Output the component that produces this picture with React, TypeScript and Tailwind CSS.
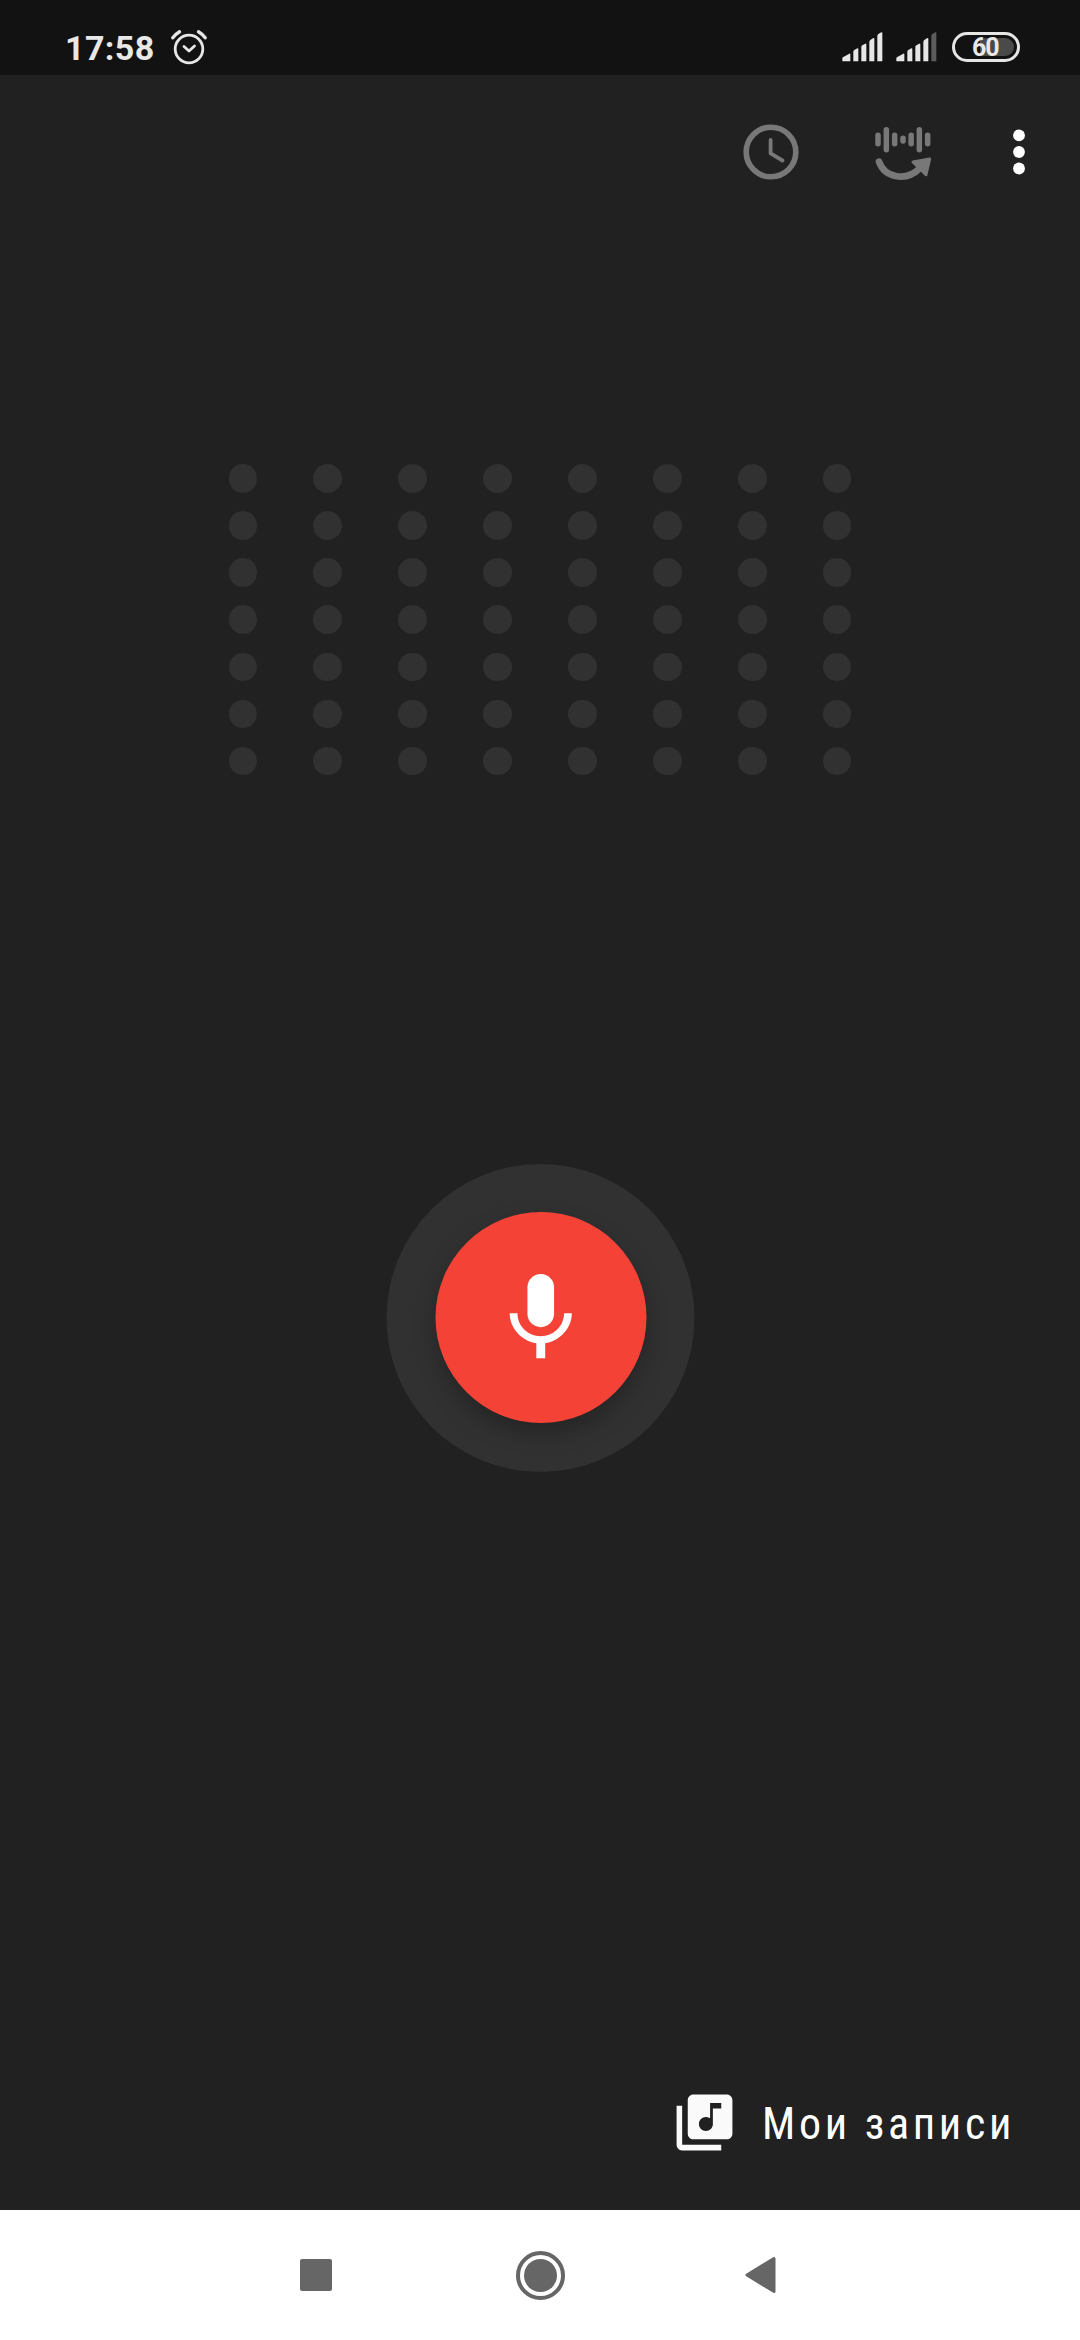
const ROWS = 7;
const COLS = 8;

function SignalBars({ weak = false }: { weak?: boolean }) {
  return (
    <svg className="h-[30px] w-[41px]" viewBox="0 0 123 90" fill="#e6e6e6">
      <path d="M1 88V79Q1 76 4 75L22 65Q25 64 25 67V88Z" />
      <path d="M34 88V59Q34 56 37 54L46 49Q49 48 49 51V88Z" />
      <path d="M58 88V45Q58 42 61 40L70 35Q73 34 73 37V88Z" />
      <path d="M82 88V30Q82 27 85 24L94 18Q97 17 97 20V88Z" />
      <path d="M106 88V12Q106 9 109 6L118 1Q121 0 121 3V88Z" fill={weak ? "#5c5c5c" : "#e6e6e6"} />
    </svg>
  );
}

function StatusBar() {
  return (
    <div className="flex h-[75px] shrink-0 bg-[#121212] pt-[29px] text-[#e8e8e8]">
      <span className="ml-[65px] w-[105px] pt-[2px] text-[34px] leading-[34px] font-bold tracking-[0.4px]">17:58</span>
      <svg className="h-[36px] w-[38px]" viewBox="0 0 38 36" fill="none" stroke="#e6e6e6" strokeLinecap="round" strokeLinejoin="round">
        <circle cx="19" cy="20" r="13.8" strokeWidth="2.8" />
        <path d="M14 17.5L19 22L24.5 17" strokeWidth="2.8" />
        <path d="M2.8 8.8Q5.5 5.2 9.5 2.8M28.5 2.8Q32.5 5.2 35.2 8.8" strokeWidth="3.4" />
      </svg>
      <div className="ml-auto mr-[60px] flex pt-[3px]">
        <SignalBars />
        <div className="ml-[13px] mr-[15px] flex">
          <SignalBars weak />
        </div>
        <div className="flex h-[30px] w-[68px] items-center rounded-full border-[3px] border-[#e6e6e6] px-[3px]">
          <div className="ml-auto flex h-[18px] w-[42px] items-center rounded-full bg-gradient-to-r from-[#121212] from-20% to-[#4a4a4a] to-20%">
            <span className="pt-[2px] text-[25px] leading-[18px] font-bold tracking-[-1px]">60</span>
          </div>
        </div>
      </div>
    </div>
  );
}

function Toolbar() {
  return (
    <div className="flex h-[154px] shrink-0 items-center justify-end pr-[53px]">
      <svg className="h-14 w-14" viewBox="0 0 56 56" fill="none" stroke="#787878">
        <circle cx="28" cy="28" r="24.8" strokeWidth="5.6" />
        <path d="M27.6 16V29.4L39.5 36.5" strokeWidth="3.8" strokeLinecap="round" strokeLinejoin="round" />
      </svg>
      <svg className="ml-[74px] h-14 w-[60px]" viewBox="459 72 180 168" fill="none" stroke="#787878" strokeLinecap="round">
        <path
          d="M474 106V131M499 89V149M524 106V131M549 115V123M573.5 106V131M598 89V149M623 106V131"
          strokeWidth="16.5"
        />
        <path d="M477 185C495 236 560 244 599 205" strokeWidth="20" />
        <path d="M579 186L629 177L618 224Z" fill="#787878" strokeWidth="9" strokeLinejoin="round" />
      </svg>
      <svg className="ml-[72px] h-[46px] w-[22px]" viewBox="0 0 22 46" fill="#fff">
        <circle cx="14" cy="6.4" r="5.9" />
        <circle cx="14" cy="23" r="5.9" />
        <circle cx="14" cy="39.5" r="5.9" />
      </svg>
    </div>
  );
}

function DotMatrix() {
  return (
    <div className="mx-auto mt-[235px] flex h-[311.5px] w-[623px] shrink-0 flex-col justify-between">
      {Array.from({ length: ROWS }, (_, r) => (
        <div key={r} className="flex justify-between">
          {Array.from({ length: COLS }, (_, c) => (
            <div key={c} className="h-[28.5px] w-[28.5px] rounded-full bg-[#313131]" />
          ))}
        </div>
      ))}
    </div>
  );
}

function RecordButton() {
  return (
    <button className="mx-auto mt-[388px] flex h-[308px] w-[308px] shrink-0 translate-x-[0.5px] items-center justify-center rounded-full bg-[#313131]">
      <span className="flex h-[211px] w-[211px] items-center justify-center rounded-full bg-[#f44336] shadow-[0_10px_22px_rgba(0,0,0,0.26)]">
        <svg className="mt-px h-[106.5px] w-[106.5px]" viewBox="0 0 24 24" fill="#fff">
          <path d="M12 14c1.66 0 3-1.34 3-3V5c0-1.66-1.34-3-3-3S9 3.34 9 5v6c0 1.66 1.34 3 3 3z" />
          <path d="M17.25 10.9c0 3-2.45 5.15-5.25 5.15S6.75 13.9 6.75 10.9H5c0 3.41 2.72 6.25 6 6.75V21h2v-3.35c3.28-.5 6-3.34 6-6.75z" />
        </svg>
      </span>
    </button>
  );
}

function NavBar() {
  return (
    <div className="flex h-[130px] shrink-0 items-center bg-white">
      <div className="ml-[300px] h-8 w-8 rounded-[2px] bg-[#666]" />
      <div className="ml-[184px] flex h-[49px] w-[49px] items-center justify-center rounded-full border-4 border-[#666]">
        <div className="h-[33px] w-[33px] rounded-full bg-[#666]" />
      </div>
      <svg className="ml-[179px] h-[38px] w-8" viewBox="0 0 32 38">
        <path d="M3 19L30 2.5V35.5Z" fill="#666" stroke="#666" strokeWidth="3" strokeLinejoin="round" />
      </svg>
    </div>
  );
}

export default function App() {
  return (
    <div className="flex h-[2340px] w-[1080px] flex-col overflow-hidden bg-[#212121] font-[Roboto,sans-serif] text-white">
      <StatusBar />
      <Toolbar />
      <DotMatrix />
      <RecordButton />
      {/* link to the saved recordings */}
      <div className="mt-auto mb-[54px] flex h-[68px] items-center">
        <svg className="ml-[671px] h-[67px] w-[67px] shrink-0" viewBox="0 0 24 24" fill="#fafafa">
          <path d="M20 2H8c-1.1 0-2 .9-2 2v12c0 1.1.9 2 2 2h12c1.1 0 2-.9 2-2V4c0-1.1-.9-2-2-2zm-2 5h-3v5.5c0 1.38-1.12 2.5-2.5 2.5S10 13.88 10 12.5s1.12-2.5 2.5-2.5c.57 0 1.08.19 1.5.51V5h4v2zM4 6H2v14c0 1.1.9 2 2 2h14v-2H4V6z" />
        </svg>
        <span className="ml-[24px] pt-1 font-['Roboto_Condensed',Roboto,sans-serif] text-[44px] leading-none tracking-[3.7px] whitespace-nowrap [font-stretch:75%]">
          Мои записи
        </span>
      </div>
      <NavBar />
    </div>
  );
}
